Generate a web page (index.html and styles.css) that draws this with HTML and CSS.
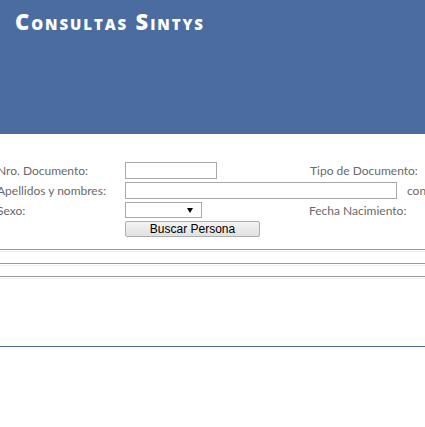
FILE: index.html
```html
<!DOCTYPE html>
<html lang="es">
<head>
<meta charset="utf-8">
<title>Consultas Sintys</title>
<link rel="stylesheet" href="styles.css">
</head>
<body>
<div class="page">
  <div class="header">
    <h1 class="title">Consultas Sintys</h1>
  </div>
  <div class="main">
    <div class="form">
      <div class="row">
        <span class="label">Nro. Documento:</span>
        <input class="txt txt-short" type="text">
        <span class="label label-right">Tipo de Documento:</span>
      </div>
      <div class="row">
        <span class="label">Apellidos y nombres:</span>
        <input class="txt txt-long" type="text">
        <span class="label label-con">con</span>
      </div>
      <div class="row">
        <span class="label">Sexo:</span>
        <span class="select"><span class="arrow"></span></span>
        <span class="label label-right label-fecha">Fecha Nacimiento:</span>
      </div>
      <div class="row row-btn">
        <span class="label"></span>
        <button class="btn" type="button">Buscar Persona</button>
      </div>
    </div>
    <div class="rules">
      <div class="rule"></div>
      <div class="rule"></div>
      <div class="rule"></div>
    </div>
  </div>
  <div class="footer"></div>
</div>
</body>
</html>
```
FILE: styles.css
```css
html, body {
  margin: 0;
  padding: 0;
  background: #fff;
  overflow: hidden;
}
.page {
  width: 425px;
}
.header {
  background: #4b6c9e;
  height: 134px;
  padding: 9px 0 0 15px;
  box-sizing: border-box;
}
.title {
  margin: 0;
  color: #fff;
  font-family: "Open Sans", "DejaVu Sans", sans-serif;
  font-weight: 800;
  font-variant: small-caps;
  font-size: 22px;
  line-height: 24px;
  letter-spacing: 1.9px;
}
.main {
  padding-top: 26px;
}
.form {
  margin-left: -3px;
  font-family: "Lato", "Open Sans", sans-serif;
  font-size: 12px;
  color: #696969;
}
.row {
  display: flex;
  align-items: center;
  height: 20px;
}
.row-btn {
  height: 18px;
}
.label {
  width: 128px;
  flex: none;
  white-space: nowrap;
}
.label-right {
  margin-left: 93px;
  width: auto;
}
.label-fecha {
  margin-left: 107px;
}
.label-con {
  width: auto;
  margin-left: 10px;
}
.txt {
  box-sizing: border-box;
  height: 17px;
  border: 1px solid #a9a9a9;
  padding: 0;
  margin: 0;
  background: #fff;
  flex: none;
}
.txt-short {
  width: 92px;
}
.txt-long {
  width: 272px;
}
.select {
  box-sizing: border-box;
  width: 77px;
  height: 16px;
  border: 1px solid #a9a9a9;
  display: flex;
  align-items: center;
  justify-content: flex-end;
  padding-right: 8px;
  flex: none;
}
.arrow {
  width: 0;
  height: 0;
  border-left: 3px solid transparent;
  border-right: 3px solid transparent;
  border-top: 5px solid #000;
}
.btn {
  box-sizing: border-box;
  width: 135px;
  height: 16px;
  margin: 0;
  padding: 0;
  border: 1px solid #adadad;
  border-radius: 2px;
  background: linear-gradient(#f3f3f3, #e1e1e1);
  font-family: "Liberation Sans", Arial, sans-serif;
  font-size: 12px;
  line-height: 14px;
  color: #000;
}
.rules {
  padding-top: 11px;
}
.rule {
  height: 1px;
  border-top: 1px solid #9a9a9a;
  border-bottom: 1px solid #eeeeee;
  margin-bottom: 11px;
}
.rules .rule:nth-child(2) {
  margin-bottom: 10px;
}
.footer {
  margin-top: 67px;
  height: 0;
  border-top: 1px solid #4b6c9e;
}
```
